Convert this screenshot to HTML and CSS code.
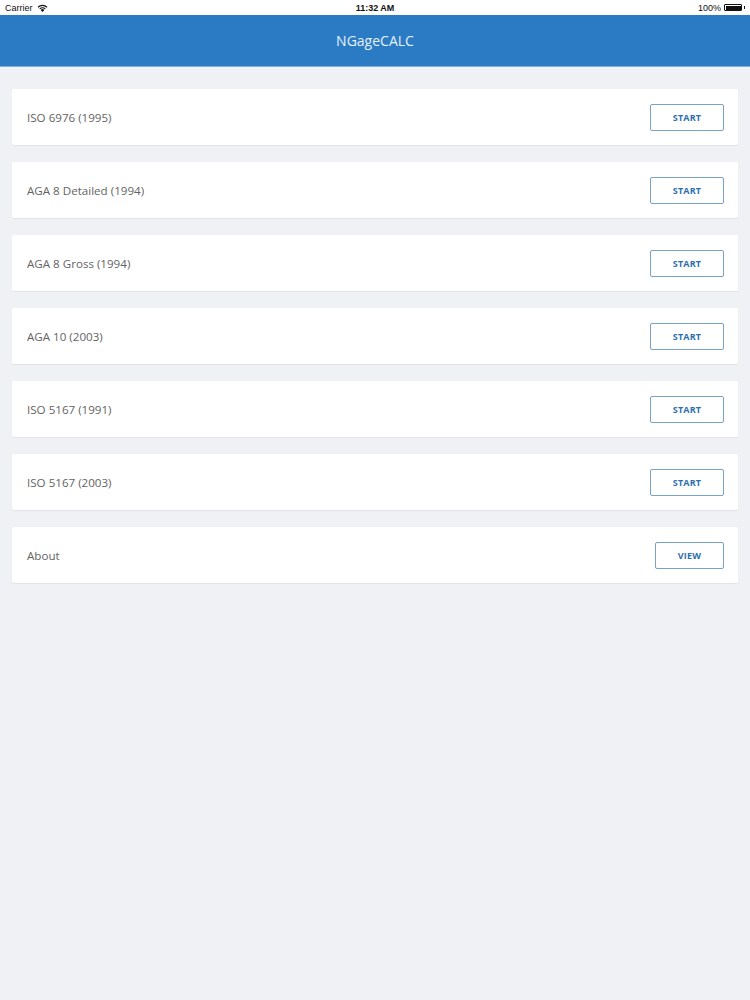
FILE: index.html
```html
<!DOCTYPE html>
<html>
<head>
<meta charset="utf-8">
<link rel="stylesheet" href="styles.css">
</head>
<body>
<div class="statusbar">
  <div class="sb-left">Carrier
    <svg class="wifi" width="11" height="8" viewBox="0 0 11 8"><path d="M5.5 8 L3.6 5.9 A2.8 2.8 0 0 1 7.4 5.9 Z" fill="#111"/><path d="M2.3 4.5 A4.6 4.6 0 0 1 8.7 4.5 L7.9 5.3 A3.5 3.5 0 0 0 3.1 5.3 Z" fill="#111"/><path d="M0.6 2.8 A7 7 0 0 1 10.4 2.8 L9.6 3.7 A5.8 5.8 0 0 0 1.4 3.7 Z" fill="#111"/></svg>
  </div>
  <div class="sb-center">11:32 AM</div>
  <div class="sb-right">100%
    <span class="battery"><span class="batt-fill"></span></span><span class="batt-tip"></span>
  </div>
</div>
<header class="navbar">NGageCALC</header>
<main class="list">
  <div class="card"><span class="label">ISO 6976 (1995)</span><button class="btn">START</button></div>
  <div class="card"><span class="label">AGA 8 Detailed (1994)</span><button class="btn">START</button></div>
  <div class="card"><span class="label">AGA 8 Gross (1994)</span><button class="btn">START</button></div>
  <div class="card"><span class="label">AGA 10 (2003)</span><button class="btn">START</button></div>
  <div class="card"><span class="label">ISO 5167 (1991)</span><button class="btn">START</button></div>
  <div class="card"><span class="label">ISO 5167 (2003)</span><button class="btn">START</button></div>
  <div class="card"><span class="label">About</span><button class="btn btn-view">VIEW</button></div>
</main>
</body>
</html>
```

FILE: styles.css
```css
html, body {
  margin: 0;
  padding: 0;
}
body {
  background: #f0f1f4;
  font-family: "Open Sans", "Liberation Sans", sans-serif;
  width: 750px;
  height: 1000px;
}
.statusbar {
  height: 15px;
  background: #fff;
  display: flex;
  align-items: center;
  justify-content: space-between;
  padding: 0 5px;
  font-family: "Liberation Sans", Arial, sans-serif;
  font-size: 9px;
  color: #111;
  position: relative;
}
.sb-left {
  display: flex;
  align-items: center;
  gap: 4px;
}
.sb-center {
  position: absolute;
  left: 0;
  right: 0;
  text-align: center;
  font-weight: bold;
  font-size: 9px;
}
.sb-right {
  display: flex;
  align-items: center;
  gap: 2px;
}
.battery {
  display: inline-block;
  width: 18px;
  height: 7px;
  border: 0.5px solid #111;
  border-radius: 1px;
  padding: 0.5px;
  box-sizing: border-box;
  margin-left: 1px;
}
.batt-fill {
  display: block;
  width: 100%;
  height: 100%;
  background: #111;
}
.batt-tip {
  display: inline-block;
  width: 1px;
  height: 3px;
  background: #111;
}
.navbar {
  height: 51px;
  background: #2b7bc4;
  border-bottom: 1px solid #7fb1e0;
  color: #e6f0fa;
  font-size: 14px;
  display: flex;
  align-items: center;
  justify-content: center;
}
.list {
  padding: 22px 12px 0;
  display: flex;
  flex-direction: column;
  gap: 17px;
}
.card {
  height: 56px;
  background: #fff;
  border-radius: 2px;
  box-shadow: 0 1px 1px rgba(0,0,0,0.06);
  display: flex;
  align-items: center;
  justify-content: space-between;
  padding: 0 14px 0 15px;
}
.label {
  font-size: 11.6px;
  color: #636363;
}
.btn {
  width: 74px;
  height: 27px;
  background: #fff;
  border: 1px solid #7aa2c4;
  border-radius: 2px;
  color: #2d6fae;
  font-family: "Open Sans", "Liberation Sans", sans-serif;
  font-weight: bold;
  font-size: 9px;
  padding: 0;
  letter-spacing: 0.2px;
}
.btn-view {
  width: 69px;
}
```
